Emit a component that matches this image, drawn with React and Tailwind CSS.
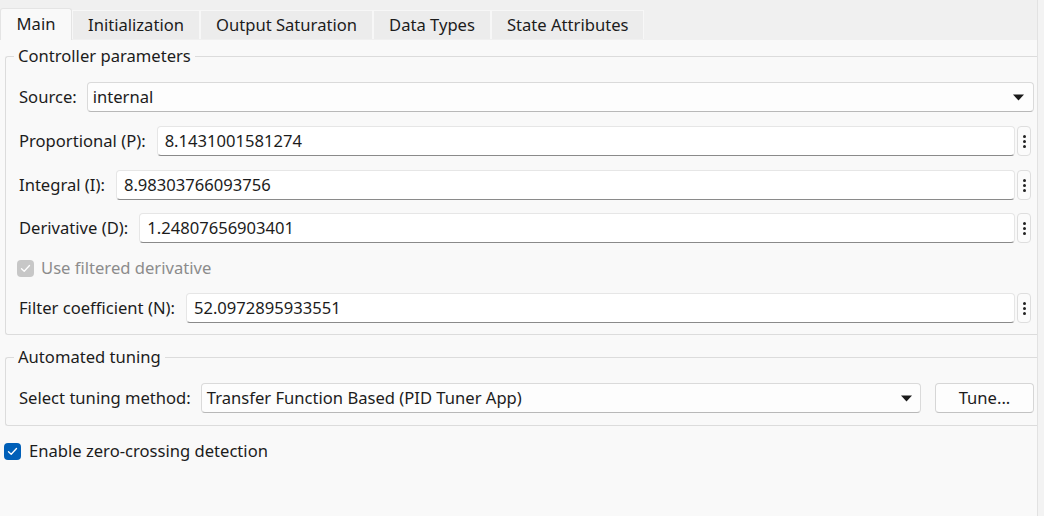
import React from 'react';

const tabs = ['Main', 'Initialization', 'Output Saturation', 'Data Types', 'State Attributes'];

const Caret = () => (
  <svg width="11" height="7" viewBox="0 0 11 7" className="shrink-0">
    <path d="M0 0.5 L11 0.5 L5.5 6.5 Z" fill="#1a1a1a" />
  </svg>
);

const Dots = () => (
  <button className="ml-[2px] mr-[3px] h-[30px] w-[14px] shrink-0 rounded-[4px] border border-[#dedede] bg-[#fbfbfb] flex flex-col items-center justify-center gap-[2px]">
    <span className="block w-[3px] h-[3px] rounded-full bg-[#222]" />
    <span className="block w-[3px] h-[3px] rounded-full bg-[#222]" />
    <span className="block w-[3px] h-[3px] rounded-full bg-[#222]" />
  </button>
);

const ParamRow = ({ label, value, className }) => (
  <div className={`flex items-center h-[30px] ${className || ''}`}>
    <span className="mr-[11px] whitespace-nowrap">{label}</span>
    <div className="flex-1 h-[30px] bg-white border border-[#e6e6e6] border-b-[#8a8a8a] rounded-[4px] flex items-center px-[7px]">
      {value}
    </div>
    <Dots />
  </div>
);

const Check = ({ disabled }) => (
  <span
    className={`w-[17px] h-[17px] rounded-[4px] flex items-center justify-center shrink-0 ${
      disabled ? 'bg-[#c7c7c7]' : 'bg-[#005fb8]'
    }`}
  >
    <svg width="11" height="9" viewBox="0 0 11 9">
      <path d="M1.5 4.8 L4.2 7.3 L9.5 1.5" fill="none" stroke="white" strokeWidth="1.3" strokeLinecap="round" strokeLinejoin="round" />
    </svg>
  </span>
);

export default function App() {
  return (
    <div
      className="w-[1044px] h-[516px] bg-[#f3f3f3] flex text-[16.6px] text-[#1c1c1c] overflow-hidden"
      style={{ fontFamily: '"Noto Sans", "Open Sans", sans-serif' }}
    >
      <div className="w-[1038px] h-full border-r border-[#e2e2e2] flex flex-col bg-[#f9f9f9]">
        {/* Tabs */}
        <div className="h-[40px] bg-[#f0f0f0] flex items-end shrink-0">
          {tabs.map((t, i) =>
            i === 0 ? (
              <div key={t} className="h-[32px] w-[72px] bg-[#f9f9f9] border border-b-0 border-[#e4e4e4] rounded-t-[3px] flex items-center justify-center">
                {t}
              </div>
            ) : (
              <div key={t} className="h-[29px] mb-[1px] px-[15px] bg-[#ececec] border border-b-0 border-[#f7f7f7] flex items-center whitespace-nowrap">
                {t}
              </div>
            )
          )}
        </div>

        {/* Controller parameters */}
        <fieldset className="mt-[5px] ml-[5px] border border-r-0 border-[#dcdcdc] rounded-l-[3px] pl-[13px] pr-[3px] pt-[15px] pb-[11px]">
          <legend className="ml-[-5px] px-[4px] leading-[22px]">Controller parameters</legend>
          <div className="flex items-center h-[30px]">
            <span className="mr-[10px]">Source:</span>
            <div className="flex-1 h-[30px] bg-[#fdfdfd] border border-[#dadada] border-b-[#b8b8b8] rounded-[4px] flex items-center justify-between pl-[5px] pr-[9px]">
              <span>internal</span>
              <Caret />
            </div>
          </div>
          <ParamRow className="mt-[14px]" label="Proportional (P):" value="8.1431001581274" />
          <ParamRow className="mt-[14px]" label="Integral (I):" value="8.98303766093756" />
          <ParamRow className="mt-[13px]" label="Derivative (D):" value="1.24807656903401" />
          <div className="flex items-center h-[24px] mt-[13px] text-[#8c8c8c]">
            <span className="ml-[-2px] mr-[7px]"><Check disabled /></span>
            <span>Use filtered derivative</span>
          </div>
          <ParamRow className="mt-[13px]" label="Filter coefficient (N):" value="52.0972895933551" />
        </fieldset>

        {/* Automated tuning */}
        <fieldset className="mt-[11px] ml-[5px] border border-r-0 border-[#dcdcdc] rounded-l-[3px] pl-[13px] pr-[3px] pt-[15px] pb-[12px]">
          <legend className="ml-[-5px] px-[4px] leading-[22px]">Automated tuning</legend>
          <div className="flex items-center h-[30px]">
            <span className="mr-[10px] whitespace-nowrap">Select tuning method:</span>
            <div className="flex-1 h-[30px] bg-[#fdfdfd] border border-[#dadada] border-b-[#b8b8b8] rounded-[4px] flex items-center justify-between pl-[5px] pr-[8px]">
              <span>Transfer Function Based (PID Tuner App)</span>
              <Caret />
            </div>
            <button className="ml-[14px] w-[99px] h-[30px] bg-[#fdfdfd] border border-[#d6d6d6] border-b-[#c2c2c2] rounded-[4px] flex items-center justify-center">
              Tune...
            </button>
          </div>
        </fieldset>

        <div className="flex items-center h-[20px] mt-[15px] ml-[4px]">
          <span className="mr-[8px]"><Check /></span>
          <span>Enable zero-crossing detection</span>
        </div>
      </div>
    </div>
  );
}
